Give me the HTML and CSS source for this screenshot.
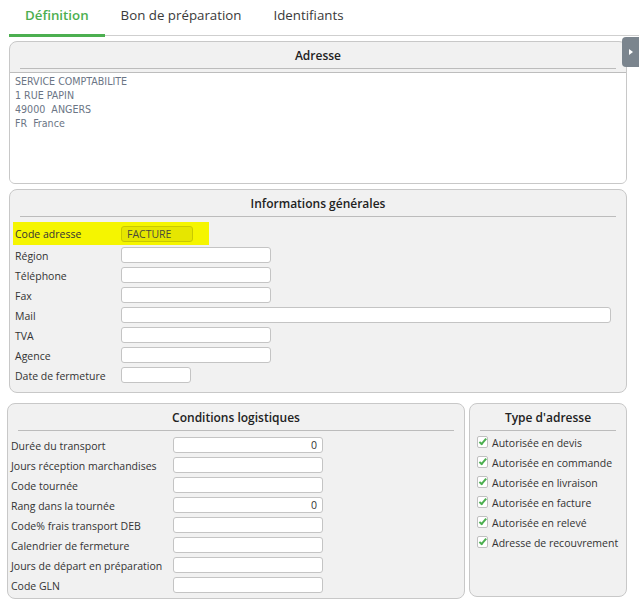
FILE: index.html
```html
<!DOCTYPE html>
<html lang="fr">
<head>
    <meta charset="UTF-8">
    <title>Adresse</title>
    <link rel="stylesheet" href="styles.css">
</head>
<body>
    <nav class="tabs">
        <a class="tab active">Définition</a>
        <a class="tab">Bon de préparation</a>
        <a class="tab">Identifiants</a>
    </nav>

    <button class="side-toggle"><span class="tri"></span></button>

    <section class="panel panel-adresse">
        <h3 class="panel-title">Adresse</h3>
        <div class="address-box">
            <div>SERVICE COMPTABILITE</div>
            <div>1 RUE PAPIN</div>
            <div>49000&nbsp; ANGERS</div>
            <div>FR&nbsp; France</div>
        </div>
    </section>

    <section class="panel panel-infos">
        <h3 class="panel-title">Informations générales</h3>
        <div class="row highlight">
            <label>Code adresse</label>
            <span class="field short code">FACTURE</span>
        </div>
        <div class="row"><label>Région</label><span class="field"></span></div>
        <div class="row"><label>Téléphone</label><span class="field"></span></div>
        <div class="row"><label>Fax</label><span class="field"></span></div>
        <div class="row"><label>Mail</label><span class="field wide"></span></div>
        <div class="row"><label>TVA</label><span class="field"></span></div>
        <div class="row"><label>Agence</label><span class="field"></span></div>
        <div class="row"><label>Date de fermeture</label><span class="field date"></span></div>
    </section>

    <div class="bottom">
        <section class="panel panel-logi">
            <h3 class="panel-title">Conditions logistiques</h3>
            <div class="row"><label>Durée du transport</label><span class="field num">0</span></div>
            <div class="row"><label>Jours réception marchandises</label><span class="field"></span></div>
            <div class="row"><label>Code tournée</label><span class="field"></span></div>
            <div class="row"><label>Rang dans la tournée</label><span class="field num">0</span></div>
            <div class="row"><label>Code% frais transport DEB</label><span class="field"></span></div>
            <div class="row"><label>Calendrier de fermeture</label><span class="field"></span></div>
            <div class="row"><label>Jours de départ en préparation</label><span class="field"></span></div>
            <div class="row"><label>Code GLN</label><span class="field"></span></div>
        </section>

        <section class="panel panel-type">
            <h3 class="panel-title">Type d'adresse</h3>
            <div class="check"><span class="box"></span><span>Autorisée en devis</span></div>
            <div class="check"><span class="box"></span><span>Autorisée en commande</span></div>
            <div class="check"><span class="box"></span><span>Autorisée en livraison</span></div>
            <div class="check"><span class="box"></span><span>Autorisée en facture</span></div>
            <div class="check"><span class="box"></span><span>Autorisée en relevé</span></div>
            <div class="check"><span class="box"></span><span>Adresse de recouvrement</span></div>
        </section>
    </div>
</body>
</html>
```
FILE: styles.css
```css
html {
    box-sizing: border-box;
    font-family: "Open Sans", sans-serif;
    font-size: 10.5px;
    color: #333;
}

*,
*::before,
*::after {
    box-sizing: inherit;
}

body {
    margin: 0;
    background: #fff;
    position: relative;
}

/* onglets */
.tabs {
    display: flex;
    height: 36px;
    margin-left: 9px;
    border-bottom: 1px solid #cfcfcf;
}

.tab {
    padding: 6px 16px 0 16px;
    font-size: 13.3px;
    color: #3a3a3a;
    line-height: 19px;
}

.tab.active {
    color: #4caf50;
    font-weight: 600;
    border-bottom: 3px solid #4caf50;
    margin-bottom: -2px;
}

.side-toggle {
    position: absolute;
    top: 37px;
    right: 0;
    width: 17px;
    height: 30px;
    border: 0;
    padding: 0;
    background: #7b858e;
    border-radius: 4px 0 0 4px;
    display: flex;
    align-items: center;
    justify-content: center;
}

.tri {
    width: 0;
    height: 0;
    border-top: 3px solid transparent;
    border-bottom: 3px solid transparent;
    border-left: 4px solid #fff;
    margin-left: 1px;
}

/* panneaux */
.panel {
    background: #f1f1f1;
    border: 1px solid #c8c8c8;
    border-radius: 8px;
}

.panel-title {
    margin: 0 10px;
    font-size: 12px;
    font-weight: 600;
    color: #222;
    text-align: center;
    line-height: 24px;
    padding-top: 2px;
    border-bottom: 1px solid #bcbcbc;
}

.panel-adresse {
    margin: 5px 12px 0 9px;
    border-radius: 8px 8px 6px 6px;
    overflow: hidden;
}

.address-box {
    margin-top: 3px;
    height: 111px;
    background: #fff;
    border-top: 1px solid #bdbdbd;
    padding: 1px 5px 0 5px;
    font-family: "DejaVu Sans Condensed", "DejaVu Sans", sans-serif;
    font-stretch: condensed;
    font-size: 10.6px;
    line-height: 14px;
    color: #6b7585;
}

.panel-infos {
    margin: 5px 12px 0 9px;
    padding: 0 3px 7px 3px;
}

.panel-infos .panel-title {
    margin: 0 7px;
}

.row {
    display: flex;
    align-items: center;
    height: 20px;
}

.row label {
    flex: 0 0 auto;
    padding-left: 2px;
    padding-top: 1px;
}

.panel-infos .row label {
    width: 108px;
}

.field {
    display: block;
    width: 150px;
    height: 16px;
    background: #fff;
    border: 1px solid #c4c4c4;
    border-radius: 3px;
    padding: 0 5px;
    line-height: 15px;
}

.field.wide {
    width: 490px;
}

.field.date {
    width: 70px;
}

.field.num {
    text-align: right;
}

.highlight {
    margin-top: 5px;
    height: 23px;
    width: 196px;
    background: #f5f500;
}

.field.code {
    width: 72px;
    background: #e6e600;
    border-color: #c9c900;
    color: #4a4a3a;
}

/* bas de page */
.bottom {
    display: flex;
    gap: 4px;
    margin: 10px 12px 0 7px;
}

.panel-logi {
    width: 458px;
    height: 196px;
    padding: 0 3px;
}

.panel-logi .panel-title {
    margin: 0 7px 4px 7px;
}

.panel-logi .row label {
    width: 162px;
    padding-left: 0;
}

.panel-type {
    flex: 1;
    height: 194px;
}

.panel-type .panel-title {
    margin-bottom: 1px;
}

.check {
    display: flex;
    align-items: center;
    height: 20px;
    padding-left: 7px;
}

.check span:last-child {
    padding-top: 1px;
}

.box {
    position: relative;
    flex: 0 0 auto;
    width: 11px;
    height: 12px;
    margin-right: 4px;
    background: #fff;
    border: 1px solid #c0c0c0;
    border-radius: 2px;
}

.box::after {
    content: "";
    position: absolute;
    left: 3px;
    top: 0;
    width: 4px;
    height: 7.5px;
    border-right: 2.2px solid #4caf50;
    border-bottom: 2.2px solid #4caf50;
    transform: rotate(40deg);
}
```
